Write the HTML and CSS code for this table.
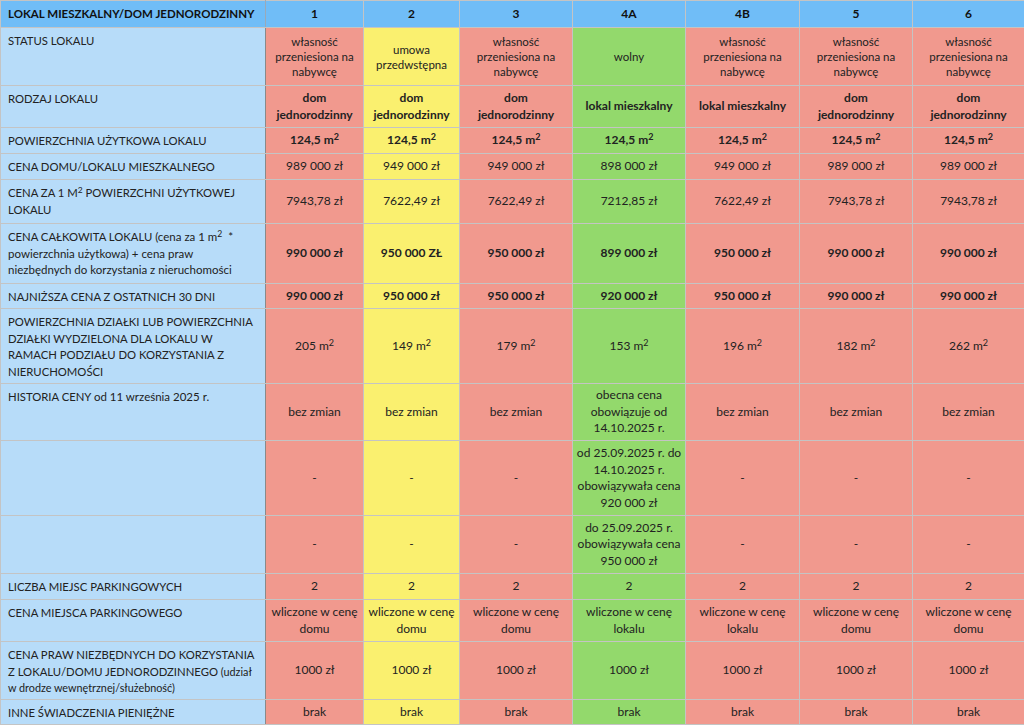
FILE: index.html
```html
<!DOCTYPE html>
<html lang="pl">
<head>
<meta charset="utf-8">
<title>Lokal mieszkalny / dom jednorodzinny</title>
<link rel="stylesheet" href="styles.css">
</head>
<body>
<table class="grid">
  <colgroup>
    <col class="c-label"><col class="c-1"><col class="c-2"><col class="c-3"><col class="c-4a"><col class="c-4b"><col class="c-5"><col class="c-6">
  </colgroup>
  <thead>
    <tr class="r-head">
      <th class="lbl">LOKAL MIESZKALNY/DOM JEDNORODZINNY</th>
      <th>1</th><th>2</th><th>3</th><th>4A</th><th>4B</th><th>5</th><th>6</th>
    </tr>
  </thead>
  <tbody>
    <tr class="r-58">
      <td class="lbl">STATUS LOKALU</td>
      <td class="red sm">własność przeniesiona na nabywcę</td>
      <td class="yel sm">umowa przedwstępna</td>
      <td class="red sm">własność przeniesiona na nabywcę</td>
      <td class="grn sm">wolny</td>
      <td class="red sm">własność przeniesiona na nabywcę</td>
      <td class="red sm">własność przeniesiona na nabywcę</td>
      <td class="red sm">własność przeniesiona na nabywcę</td>
    </tr>
    <tr class="r-42">
      <td class="lbl">RODZAJ LOKALU</td>
      <td class="red b kind">dom jednorodzinny</td>
      <td class="yel b kind">dom jednorodzinny</td>
      <td class="red b kind">dom jednorodzinny</td>
      <td class="grn b kind">lokal mieszkalny</td>
      <td class="red b kind">lokal mieszkalny</td>
      <td class="red b kind">dom jednorodzinny</td>
      <td class="red b kind">dom jednorodzinny</td>
    </tr>
    <tr class="r-26">
      <td class="lbl">POWIERZCHNIA UŻYTKOWA LOKALU</td>
      <td class="red b">124,5 m<sup>2</sup></td>
      <td class="yel b">124,5 m<sup>2</sup></td>
      <td class="red b">124,5 m<sup>2</sup></td>
      <td class="grn b">124,5 m<sup>2</sup></td>
      <td class="red b">124,5 m<sup>2</sup></td>
      <td class="red b">124,5 m<sup>2</sup></td>
      <td class="red b">124,5 m<sup>2</sup></td>
    </tr>
    <tr class="r-26">
      <td class="lbl">CENA DOMU/LOKALU MIESZKALNEGO</td>
      <td class="red">989 000 zł</td>
      <td class="yel">949 000 zł</td>
      <td class="red">949 000 zł</td>
      <td class="grn">898 000 zł</td>
      <td class="red">949 000 zł</td>
      <td class="red">989 000 zł</td>
      <td class="red">989 000 zł</td>
    </tr>
    <tr class="r-44">
      <td class="lbl">CENA ZA 1 M<sup>2</sup> POWIERZCHNI UŻYTKOWEJ LOKALU</td>
      <td class="red">7943,78 zł</td>
      <td class="yel">7622,49 zł</td>
      <td class="red">7622,49 zł</td>
      <td class="grn">7212,85 zł</td>
      <td class="red">7622,49 zł</td>
      <td class="red">7943,78 zł</td>
      <td class="red">7943,78 zł</td>
    </tr>
    <tr class="r-60">
      <td class="lbl">CENA CAŁKOWITA LOKALU <span class="lc">(cena za 1 m<sup>2</sup>&nbsp; * powierzchnia użytkowa) + cena praw niezbędnych do korzystania z nieruchomości</span></td>
      <td class="red b">990 000 zł</td>
      <td class="yel b">950 000 ZŁ</td>
      <td class="red b">950 000 zł</td>
      <td class="grn b">899 000 zł</td>
      <td class="red b">950 000 zł</td>
      <td class="red b">990 000 zł</td>
      <td class="red b">990 000 zł</td>
    </tr>
    <tr class="r-25">
      <td class="lbl">NAJNIŻSZA CENA Z OSTATNICH 30 DNI</td>
      <td class="red b">990 000 zł</td>
      <td class="yel b">950 000 zł</td>
      <td class="red b">950 000 zł</td>
      <td class="grn b">920 000 zł</td>
      <td class="red b">950 000 zł</td>
      <td class="red b">990 000 zł</td>
      <td class="red b">990 000 zł</td>
    </tr>
    <tr class="r-75">
      <td class="lbl">POWIERZCHNIA DZIAŁKI LUB POWIERZCHNIA DZIAŁKI WYDZIELONA DLA LOKALU W RAMACH PODZIAŁU DO KORZYSTANIA Z NIERUCHOMOŚCI</td>
      <td class="red">205 m<sup>2</sup></td>
      <td class="yel">149 m<sup>2</sup></td>
      <td class="red">179 m<sup>2</sup></td>
      <td class="grn">153 m<sup>2</sup></td>
      <td class="red">196 m<sup>2</sup></td>
      <td class="red">182 m<sup>2</sup></td>
      <td class="red">262 m<sup>2</sup></td>
    </tr>
    <tr class="r-57">
      <td class="lbl">HISTORIA CENY <span class="lc">od 11 września 2025 r.</span></td>
      <td class="red">bez zmian</td>
      <td class="yel">bez zmian</td>
      <td class="red">bez zmian</td>
      <td class="grn">obecna cena obowiązuje od 14.10.2025 r.</td>
      <td class="red">bez zmian</td>
      <td class="red">bez zmian</td>
      <td class="red">bez zmian</td>
    </tr>
    <tr class="r-75">
      <td class="lbl"></td>
      <td class="red">-</td>
      <td class="yel">-</td>
      <td class="red">-</td>
      <td class="grn">od 25.09.2025 r. do 14.10.2025 r. obowiązywała cena 920 000 zł</td>
      <td class="red">-</td>
      <td class="red">-</td>
      <td class="red">-</td>
    </tr>
    <tr class="r-58">
      <td class="lbl"></td>
      <td class="red">-</td>
      <td class="yel">-</td>
      <td class="red">-</td>
      <td class="grn">do 25.09.2025 r. obowiązywała cena 950 000 zł</td>
      <td class="red">-</td>
      <td class="red">-</td>
      <td class="red">-</td>
    </tr>
    <tr class="r-26">
      <td class="lbl">LICZBA MIEJSC PARKINGOWYCH</td>
      <td class="red">2</td>
      <td class="yel">2</td>
      <td class="red">2</td>
      <td class="grn">2</td>
      <td class="red">2</td>
      <td class="red">2</td>
      <td class="red">2</td>
    </tr>
    <tr class="r-42">
      <td class="lbl">CENA MIEJSCA PARKINGOWEGO</td>
      <td class="red">wliczone w cenę domu</td>
      <td class="yel">wliczone w cenę domu</td>
      <td class="red">wliczone w cenę domu</td>
      <td class="grn">wliczone w cenę lokalu</td>
      <td class="red">wliczone w cenę lokalu</td>
      <td class="red">wliczone w cenę domu</td>
      <td class="red">wliczone w cenę domu</td>
    </tr>
    <tr class="r-58">
      <td class="lbl">CENA PRAW NIEZBĘDNYCH DO KORZYSTANIA Z LOKALU/DOMU JEDNORODZINNEGO <span class="lc xs">(udział w drodze wewnętrznej/służebność)</span></td>
      <td class="red">1000 zł</td>
      <td class="yel">1000 zł</td>
      <td class="red">1000 zł</td>
      <td class="grn">1000 zł</td>
      <td class="red">1000 zł</td>
      <td class="red">1000 zł</td>
      <td class="red">1000 zł</td>
    </tr>
    <tr class="r-25">
      <td class="lbl">INNE ŚWIADCZENIA PIENIĘŻNE</td>
      <td class="red">brak</td>
      <td class="yel">brak</td>
      <td class="red">brak</td>
      <td class="grn">brak</td>
      <td class="red">brak</td>
      <td class="red">brak</td>
      <td class="red">brak</td>
    </tr>
  </tbody>
</table>
</body>
</html>
```

FILE: styles.css
```css
html, body {
  margin: 0;
  padding: 0;
  background: #ffffff;
}

body {
  font-family: Lato, "Noto Sans", "Liberation Sans", sans-serif;
  color: #222222;
  font-size: 12px;
}

.grid {
  width: 1024px;
  border-collapse: collapse;
  table-layout: fixed;
}

.c-label { width: 265px; }
.c-1 { width: 98px; }
.c-2 { width: 96px; }
.c-3 { width: 113px; }
.c-4a { width: 113px; }
.c-4b { width: 114px; }
.c-5 { width: 113px; }
.c-6 { width: 112px; }

.grid th,
.grid td {
  border: 1px solid #c4c4c4;
  padding: 0 2px;
  text-align: center;
  vertical-align: middle;
  line-height: 16.5px;
  overflow: hidden;
}

.grid th {
  background: #70bdf7;
  font-weight: 700;
  font-size: 12px;
  color: #111111;
}

.grid th.lbl {
  text-align: left;
  padding-left: 7px;
  font-size: 11.5px;
  white-space: nowrap;
  border-right: 1px solid #9aa9b8;
}

.grid td.lbl {
  background: #b7dcf9;
  text-align: left;
  vertical-align: top;
  padding: 5px 6px 0 7px;
  font-size: 11.3px;
  line-height: 16.7px;
  border-right: 1px solid #8a8a8a;
}

.lc { font-size: 11.5px; }
.lc.xs { font-size: 10.8px; }

.red { background: #f1998e; }
.yel { background: #faf06f; }
.grn { background: #93d96c; }

.grid td.sm { font-size: 11.5px; line-height: 15px; }
.b { font-weight: 700; }
.grid td.kind { padding: 0 8px; }

sup {
  font-size: 0.75em;
  line-height: 1;
  vertical-align: 0.45em;
}

.r-head th { height: 26px; }
.r-58 td { height: 57px; }
.r-42 td { height: 41px; }
.r-26 td { height: 25px; }
.r-25 td { height: 24px; }
.r-44 td { height: 43px; }
.r-60 td { height: 59px; }
.r-75 td { height: 74px; }
.r-57 td { height: 56px; }
.grid td.lbl { height: auto; }
```
